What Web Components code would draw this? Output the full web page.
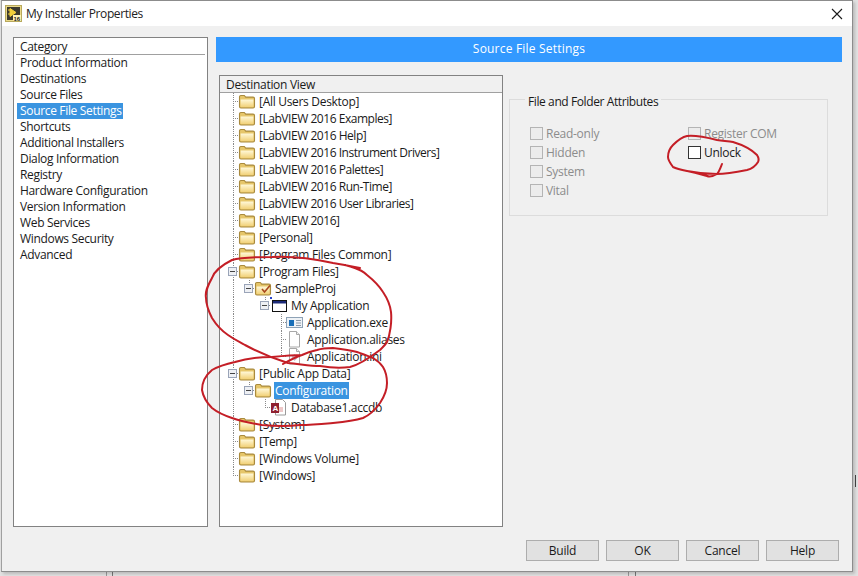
<!DOCTYPE html>
<html>
<head>
<meta charset="utf-8">
<title>My Installer Properties</title>
<style>
    html, body { margin: 0; height: 100%; overflow: hidden; }
    body {
        width: 858px; height: 576px; position: relative;
        font: 12px "Open Sans", "Noto Sans", sans-serif; color: #1a1a1a;
        background:
            linear-gradient(#444, #444) 855px 475px / 1px 12px no-repeat,
            linear-gradient(#777, #777) 112px 572px / 1px 4px no-repeat,
            linear-gradient(#999, #999) 106px 572px / 1px 4px no-repeat,
            linear-gradient(#777, #777) 635px 572px / 1px 4px no-repeat,
            linear-gradient(#999, #999) 628px 572px / 1px 4px no-repeat,
            #e2e2e2;
    }
</style>
</head>
<body>
<installer-window title-text="My Installer Properties">
    <category-list slot="side" selected="Source File Settings"></category-list>
    <section-banner slot="banner">Source File Settings</section-banner>
    <dest-tree slot="tree"></dest-tree>
    <attr-group slot="attrs"></attr-group>
    <dlg-button slot="buttons">Build</dlg-button>
    <dlg-button slot="buttons">OK</dlg-button>
    <dlg-button slot="buttons">Cancel</dlg-button>
    <dlg-button slot="buttons">Help</dlg-button>
</installer-window>
<red-marks></red-marks>

<script>
class InstallerWindow extends HTMLElement {
    constructor() {
        super();
        this.attachShadow({ mode: 'open' });
    }

    connectedCallback() {
        this.shadowRoot.innerHTML = `
            <style>
                :host {
                    display: flex; flex-direction: column; box-sizing: border-box;
                    width: 852px; height: 572px; margin-left: 1px;
                    background: #f0f0f0; border: 1px solid #8c8c8c; border-left-color: #a0a0a0;
                    box-shadow: 2px 2px 3px rgba(0,0,0,.18);
                }
                .title { display: flex; align-items: center; height: 25px; background: #fff; padding: 0 9px 0 3px; flex: none; }
                .title svg.app { margin-right: 4px; }
                .title span { flex: 1; font-size: 12px; letter-spacing: -.41px; color: #222; }
                .main { flex: 1; display: flex; gap: 8px; padding: 11px 10px 0 11px; min-height: 0; }
                .right { flex: 1; display: flex; flex-direction: column; min-width: 0; }
                .panes { display: flex; gap: 6px; padding: 13px 0 0 3px; flex: 1; min-height: 0; }
                .buttons { display: flex; justify-content: flex-end; gap: 7px; padding: 13px 13px 10px 0; flex: none; }
            </style>
            <div class="title">
                <svg class="app" width="17" height="17" viewBox="0 0 17 17">
                    <rect x=".5" y=".5" width="16" height="16" fill="#e9d98a" stroke="#b9a95c"/>
                    <rect x="2" y="2" width="13" height="13" fill="#3d3a2e"/>
                    <path d="M3 5h3M3 9h3M5 3.5l6 4-6 4z" fill="#f2cf3a" stroke="#f2cf3a"/>
                    <rect x="8" y="10" width="8" height="6" fill="#fff3b8"/>
                    <text x="8.5" y="15.5" font-size="6" font-weight="700" font-family="Liberation Sans" fill="#222">16</text>
                </svg>
                <span>${this.getAttribute('title-text')}</span>
                <svg width="12" height="12" viewBox="0 0 12 12"><path d="M1 1l10 10M11 1L1 11" stroke="#1a1a1a" stroke-width="1.1" fill="none"/></svg>
            </div>
            <div class="main">
                <slot name="side"></slot>
                <div class="right">
                    <slot name="banner"></slot>
                    <div class="panes">
                        <slot name="tree"></slot>
                        <slot name="attrs"></slot>
                    </div>
                </div>
            </div>
            <div class="buttons"><slot name="buttons"></slot></div>
        `;
    }
}

class CategoryList extends HTMLElement {
    constructor() {
        super();
        this.attachShadow({ mode: 'open' });
        this.items = ["Product Information", "Destinations", "Source Files", "Source File Settings", "Shortcuts",
            "Additional Installers", "Dialog Information", "Registry", "Hardware Configuration",
            "Version Information", "Web Services", "Windows Security", "Advanced"];
    }

    connectedCallback() {
        const selected = this.getAttribute('selected');
        this.shadowRoot.innerHTML = `
            <style>
                :host { display: block; box-sizing: border-box; width: 195px; height: 490px; background: #fff; border: 1px solid #828282; padding: 1px 2px; }
                .head { height: 15px; line-height: 15px; padding-left: 4px; border-bottom: 1px solid #a0a0a0; letter-spacing: -.33px; }
                .row { height: 16px; line-height: 16px; letter-spacing: -.33px; padding-left: 4px; }
                .row span { display: inline-block; padding: 0 1px 0 3px; margin-left: -3px; }
                .sel span { background: #3a94e0; color: #fff; }
            </style>
            <div class="head">Category</div>
            ${this.items.map(i => `<div class="row ${i === selected ? 'sel' : ''}"><span>${i}</span></div>`).join("")}
        `;
    }
}

class SectionBanner extends HTMLElement {
    constructor() {
        super();
        this.attachShadow({ mode: 'open' });
    }

    connectedCallback() {
        this.shadowRoot.innerHTML = `
            <style>
                :host { display: block; height: 25px; line-height: 24px; background: #3399ff; color: #fff; text-align: center; font-size: 12px; letter-spacing: .2px; flex: none; }
            </style>
            <slot></slot>
        `;
    }
}

const FOLDER = `<defs><linearGradient id="fg" x1="0" y1="0" x2="0" y2="1"><stop offset="0" stop-color="#fff8d8"/><stop offset="1" stop-color="#f2d27a"/></linearGradient></defs>
    <path d="M1.5 6V4c0-.8.6-1.5 1.4-1.5h3.4l1.4 1.6h7.4c.8 0 1.4.6 1.4 1.4v7.9c0 .9-.6 1.6-1.4 1.6H2.9c-.8 0-1.4-.7-1.4-1.6z" fill="#e6c66a" stroke="#a98a3e" stroke-width="1.1"/>
    <path d="M2.6 6.6h12.8v6.6c0 .4-.2.7-.6.7H3.2c-.4 0-.6-.3-.6-.7z" fill="url(#fg)"/>`;

const ICONS = {
    folder: FOLDER,
    proj: FOLDER + `<path d="M8 9l2.5 3L16 5.5" fill="none" stroke="#a8471e" stroke-width="1.6"/>`,
    app: `<rect x="2.5" y="3.5" width="14" height="11" fill="#fff" stroke="#111"/><rect x="3" y="4" width="13" height="2.5" fill="#1c2a78"/><rect x="0" y="0" width="2" height="2" fill="#2a45c8"/>`,
    exe: `<rect x=".5" y="3.5" width="16" height="10" fill="#eef2f6" stroke="#8ea2b6"/><rect x="3" y="6" width="5" height="6" fill="#1a6fb8"/><path d="M10 6.5h5M10 9h5M10 11.5h5" stroke="#8a98a8"/>`,
    doc: `<path d="M3.5 .5h7l3 3v12.5h-10z" fill="#fff" stroke="#a8a8a8"/><path d="M10.5 .5v3h3" fill="#eee" stroke="#a8a8a8"/>`,
    ini: `<path d="M3.5 .5h7l3 3v12.5h-10z" fill="#fff" stroke="#a8a8a8"/><path d="M10.5 .5v3h3" fill="#eee" stroke="#a8a8a8"/><path d="M5.5 9l3-3 3 4-3 3z" fill="#c8b4c4"/>`,
    accdb: `<path d="M5.5 .5h7l3 3v12.5h-10z" fill="#fff" stroke="#9a9a9a"/><path d="M9 8h4v5H9z" fill="#eec8c8"/><rect x="1" y="4" width="8" height="10" fill="#8f2030"/><text x="2.6" y="12.3" font-size="8" font-weight="700" font-family="Liberation Sans" fill="#fff">A</text>`
};

class TreeRow extends HTMLElement {
    constructor() {
        super();
        this.attachShadow({ mode: 'open' });
    }

    connectedCallback() {
        const level = +this.getAttribute('level') || 0;
        const icon = this.getAttribute('icon') || 'folder';
        const guides = (this.getAttribute('guides') || '').split(',').filter(Boolean).map(Number);
        const last = this.hasAttribute('last');
        const x = 13 + level * 16;
        const dots = 'repeating-linear-gradient(#8a8a8a 0 1px, transparent 1px 2px)';
        const hdots = 'repeating-linear-gradient(90deg, #8a8a8a 0 1px, transparent 1px 2px)';
        const bg = [`${hdots} ${x}px 8px / 6px 1px no-repeat`, `${dots} ${x}px 0 / 1px ${last ? 9 : 17}px no-repeat`];
        guides.forEach(g => bg.push(`${dots} ${13 + g * 16}px 0 / 1px 17px no-repeat`));
        const label = this.getAttribute('label');
        // LabVIEW names run wide in this font because of the digits and capitals
        const spacing = label.includes('2016') ? -.46 : -.3;
        this.shadowRoot.innerHTML = `
            <style>
                :host { display: block; height: 17px; background: ${bg.join(', ')}; }
                .row { display: flex; align-items: center; height: 17px; padding-left: ${18 + level * 16}px; position: relative; }
                .exp { position: absolute; left: ${8 + level * 16}px; top: 4px; width: 9px; height: 9px; box-sizing: border-box; border: 1px solid #9aa4b8; background: #eef0f4; }
                .exp::after { content: ""; position: absolute; left: 1px; right: 1px; top: 3px; height: 1px; background: #444; }
                svg { flex: none; margin-right: 2px; }
                span { padding: 0 1px; letter-spacing: ${spacing}px; white-space: nowrap; line-height: 17px; }
                :host([selected]) span { background: #3a94e0; color: #fff; }
            </style>
            <div class="row">
                ${this.hasAttribute('open') ? '<div class="exp"></div>' : ''}
                <svg width="18" height="17" viewBox="0 0 18 17">${ICONS[icon]}</svg>
                <span>${label}</span>
            </div>
        `;
    }
}

class DestTree extends HTMLElement {
    constructor() {
        super();
        this.attachShadow({ mode: 'open' });
        this.rows = [
            ["[All Users Desktop]"], ["[LabVIEW 2016 Examples]"], ["[LabVIEW 2016 Help]"],
            ["[LabVIEW 2016 Instrument Drivers]"], ["[LabVIEW 2016 Palettes]"], ["[LabVIEW 2016 Run-Time]"],
            ["[LabVIEW 2016 User Libraries]"], ["[LabVIEW 2016]"], ["[Personal]"], ["[Program Files Common]"],
            ["[Program Files]", 0, "folder", "open"],
            ["SampleProj", 1, "proj", "open last", "0"],
            ["My Application", 2, "app", "open last", "0"],
            ["Application.exe", 3, "exe", "", "0"],
            ["Application.aliases", 3, "doc", "", "0"],
            ["Application.ini", 3, "ini", "last", "0"],
            ["[Public App Data]", 0, "folder", "open"],
            ["Configuration", 1, "folder", "open last selected", "0"],
            ["Database1.accdb", 2, "accdb", "last", "0"],
            ["[System]"], ["[Temp]"], ["[Windows Volume]"], ["[Windows]", 0, "folder", "last"]
        ];
    }

    connectedCallback() {
        this.shadowRoot.innerHTML = `
            <style>
                :host { display: block; box-sizing: border-box; width: 284px; height: 452px; background: #fff; border: 1px solid #828282; flex: none; }
                .head { height: 16px; line-height: 17px; padding-left: 6px; background: #f0f0f0; border-bottom: 1px solid #a0a0a0; letter-spacing: -.3px; }
            </style>
            <div class="head">Destination View</div>
            <div class="rows"></div>
        `;
        const holder = this.shadowRoot.querySelector(".rows");
        this.rows.forEach(([label, level, icon, flags, guides]) => {
            const row = document.createElement("tree-row");
            row.setAttribute("label", label);
            row.setAttribute("level", level || 0);
            row.setAttribute("icon", icon || "folder");
            if (guides) row.setAttribute("guides", guides);
            (flags || "").split(" ").filter(Boolean).forEach(f => row.setAttribute(f, ""));
            holder.appendChild(row);
        });
    }
}

class AttrCheck extends HTMLElement {
    constructor() {
        super();
        this.attachShadow({ mode: 'open' });
    }

    connectedCallback() {
        this.shadowRoot.innerHTML = `
            <style>
                :host { display: flex; align-items: center; height: 19px; color: #8c8c8c; letter-spacing: -.28px; }
                :host([on]) { color: #1a1a1a; }
                i { display: block; box-sizing: border-box; width: 13px; height: 13px; margin-right: 3px; border: 1px solid #b4b4b4; background: #ececec; }
                :host([on]) i { border-color: #333; background: #fff; }
            </style>
            <i></i><slot></slot>
        `;
    }
}

class AttrGroup extends HTMLElement {
    constructor() {
        super();
        this.attachShadow({ mode: 'open' });
    }

    connectedCallback() {
        this.shadowRoot.innerHTML = `
            <style>
                :host { display: block; box-sizing: border-box; width: 319px; height: 117px; margin-top: 24px; border: 1px solid #dcdcdc; flex: none; }
                .legend { width: fit-content; margin: -6px 0 0 15px; padding: 0 3px; height: 16px; line-height: 16px; background: #f0f0f0; color: #1a1a1a; letter-spacing: -.4px; }
                .cols { display: grid; grid-template-columns: 158px 1fr; padding: 14px 0 0 20px; }
            </style>
            <div class="legend">File and Folder Attributes</div>
            <div class="cols">
                <div>
                    <attr-check>Read-only</attr-check>
                    <attr-check>Hidden</attr-check>
                    <attr-check>System</attr-check>
                    <attr-check>Vital</attr-check>
                </div>
                <div>
                    <attr-check>Register COM</attr-check>
                    <attr-check on>Unlock</attr-check>
                </div>
            </div>
        `;
    }
}

class DlgButton extends HTMLElement {
    constructor() {
        super();
        this.attachShadow({ mode: 'open' });
    }

    connectedCallback() {
        this.shadowRoot.innerHTML = `
            <style>
                :host { display: block; box-sizing: border-box; width: 73px; height: 21px; line-height: 19px; text-align: center; background: #e1e1e1; border: 1px solid #adadad; color: #1a1a1a; letter-spacing: -.2px; }
            </style>
            <slot></slot>
        `;
    }
}

class RedMarks extends HTMLElement {
    constructor() {
        super();
        this.attachShadow({ mode: 'open' });
    }

    connectedCallback() {
        this.shadowRoot.innerHTML = `
            <style>
                :host { position: absolute; left: 0; top: 0; width: 858px; height: 576px; pointer-events: none; }
                path { fill: none; stroke: #c41e26; stroke-width: 2; stroke-linecap: round; stroke-linejoin: round; }
            </style>
            <svg width="858" height="576" viewBox="0 0 858 576">
                <path d="M360 268C350 266 340 264 333 263C310 258 290 256 272 257C255 257 242 257 232 260C220 266 214 272 212 278C207 287 205 292 206 298C206 306 209 312 212 318C217 326 222 331 228 335C235 340 240 342 245 345C258 352 272 358 288 363C300 364 310 366 320 366C332 368 342 368 350 367C358 365 372 356 380 350C384 346 386 344 387 342C390 335 392 322 391 312C390 303 387 298 383 292C378 284 372 279 367 275C364 272 362 270 345 265"/>
                <path d="M283 364C290 360 296 357 302 355C308 352 312 351 317 350C323 348 328 348 333 348C342 349 350 350 357 352C363 354 368 356 373 358C378 361 381 364 383 367C386 372 387 377 387 383C387 391 384 397 380 403C375 410 370 415 363 418C353 421 343 422 333 423C322 424 312 425 300 425C285 427 272 426 262 425C250 423 240 421 232 418C223 415 217 412 212 408C206 402 203 396 202 390C202 382 206 375 212 370C219 366 226 364 235 362C248 358 260 357 272 357C282 356 292 355 302 355"/>
                <path d="M722 164C720 169 719 172 717 174C712 177 709 177 707 176C700 174 693 172 687 171C682 170 677 169 673 167C670 163 668 160 668 157C668 152 670 148 673 145C678 140 682 137 687 136C695 135 705 137 717 140C724 141 729 141 733 142C743 145 752 150 757 155C759 158 759 160 758 162C755 167 751 169 747 170C737 172 727 174 717 174C707 174 697 173 687 171"/>
            </svg>
        `;
    }
}

customElements.define('installer-window', InstallerWindow);
customElements.define('category-list', CategoryList);
customElements.define('section-banner', SectionBanner);
customElements.define('tree-row', TreeRow);
customElements.define('dest-tree', DestTree);
customElements.define('attr-check', AttrCheck);
customElements.define('attr-group', AttrGroup);
customElements.define('dlg-button', DlgButton);
customElements.define('red-marks', RedMarks);
</script>
</body>
</html>
